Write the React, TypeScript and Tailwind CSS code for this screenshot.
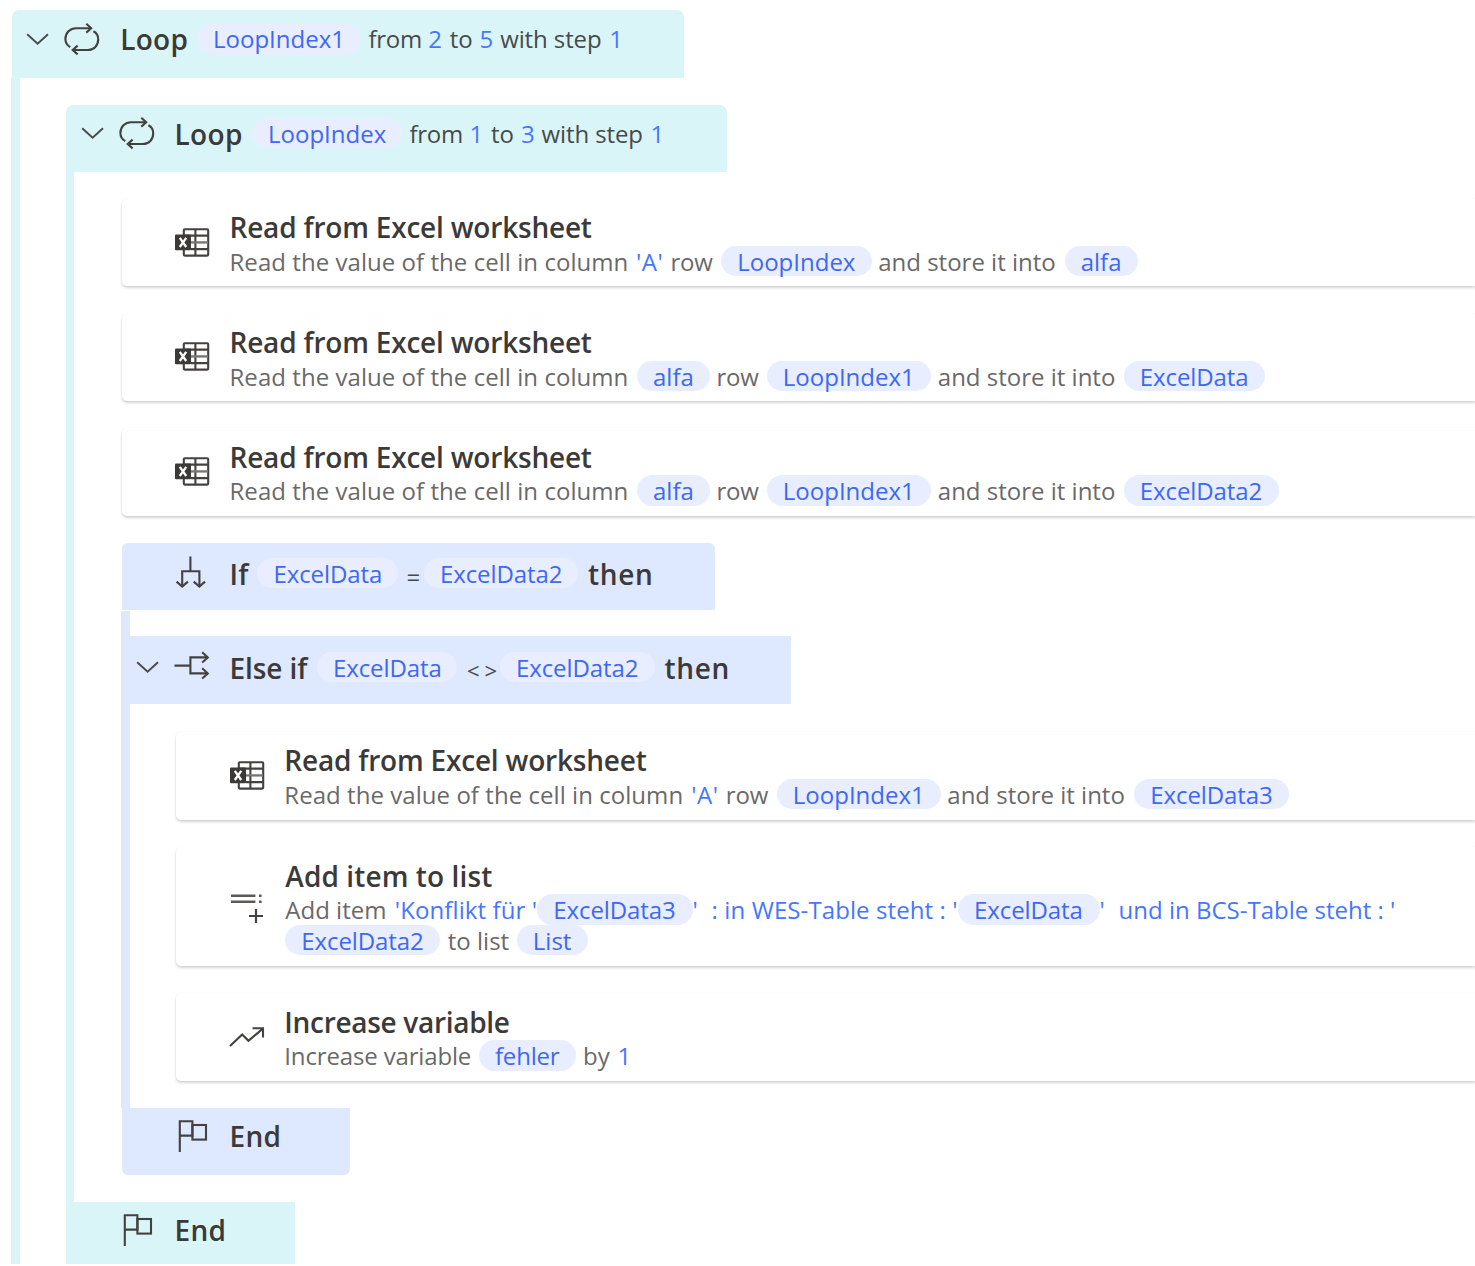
import type { ReactNode } from "react";

/* ---------- icons ---------- */

function Svg({ children, className = "" }: { children: ReactNode; className?: string }) {
  return (
    <svg viewBox="0 0 36 36" fill="none" stroke="#444241" strokeWidth="2.1" className={`h-[36px] w-[36px] shrink-0 ${className}`}>
      {children}
    </svg>
  );
}

function Chevron({ className = "" }: { className?: string }) {
  return (
    <svg viewBox="0 0 24 36" fill="none" stroke="#4a4a4a" strokeWidth="1.9" className={`h-[36px] w-[24px] shrink-0 ${className}`}>
      <path d="M1.2 13.2 L11.6 22.8 L22 13.2" />
    </svg>
  );
}

function LoopIcon() {
  return (
    <Svg>
      <path d="M6.3 26.2 C3.4 24.6 1.4 21.7 1.4 18 C1.4 12 6 7.2 12 7.2 H27" />
      <path d="M22.3 2.8 L27.2 7.2 L22.3 11.6" />
      <path d="M29.4 10.2 C32.6 11.8 34.2 14.7 34.2 18.3 C34.2 24.5 30 29 24 29 H9" />
      <path d="M13.6 24.6 L8.7 29 L13.6 33.4" />
    </Svg>
  );
}

function ExcelIcon() {
  return (
    <Svg>
      <rect x="9.8" y="4.2" width="24.4" height="26.4" rx="1" />
      <path d="M9.8 10.6 H34 M17 24.1 H34 M21.4 4 V31" />
      <path d="M17 17.4 H34" stroke="#7a7877" strokeWidth="2.4" />
      <rect x="1" y="9.6" width="16" height="15.6" rx="1" fill="#3b3a39" stroke="none" />
      <path d="M5.8 12.8 L12.2 22 M12.2 12.8 L5.8 22" stroke="#ffffff" strokeWidth="2.3" />
    </Svg>
  );
}

function IfIcon() {
  return (
    <Svg>
      <path d="M16.4 3.5 V18.3 M8.2 33.5 V18.3 H25.4 V33.5" />
      <path d="M2.6 28.6 L8.2 33.6 L13.9 28.6 M19.7 28.6 L25.4 33.6 L31 28.6" />
    </Svg>
  );
}

function ElseIfIcon() {
  return (
    <Svg>
      <path d="M0.5 18.6 H16.4 M33.5 10.4 H16.4 V26.4 H33.5" />
      <path d="M28.2 5.2 L33.8 10.4 L28.2 15.6 M28.2 21.2 L33.8 26.4 L28.2 31.6" />
    </Svg>
  );
}

function FlagIcon() {
  return (
    <Svg>
      <path d="M5.8 34 V3.2 H18.4 V17.6 H5.8" />
      <rect x="18.4" y="7" width="13.6" height="14.6" />
    </Svg>
  );
}

function AddListIcon() {
  return (
    <Svg>
      <path d="M2 6.8 H26.4 M2 12.8 H26.4 M30 6.8 H32.6 M30 12.8 H32.6" stroke="#5c5a59" strokeWidth="2.6" />
      <path d="M20 27 H34 M27 20 V34" strokeWidth="2.2" />
    </Svg>
  );
}

function TrendIcon() {
  return (
    <Svg>
      <path d="M1 27 L13.2 15.4 L19.4 21.8 L33.8 9.6" strokeWidth="2.1" />
      <path d="M23.6 9.2 H34 V18.4" strokeWidth="2.1" />
    </Svg>
  );
}

/* ---------- text pieces ---------- */

function Run({ children, className }: { children: ReactNode; className: string }) {
  return <span className={`shrink-0 whitespace-pre ${className}`}>{children}</span>;
}

function Lit({ children, className }: { children: ReactNode; className: string }) {
  return <span className={`shrink-0 whitespace-pre text-[#4676ff] ${className}`}>{children}</span>;
}

function Pill({ children, className }: { children: ReactNode; className: string }) {
  return (
    <span className={`h-[30.5px] shrink-0 whitespace-pre rounded-full bg-[#e8eeff] pl-[16px] text-[#3f68f2] ${className}`}>
      {children}
    </span>
  );
}

function Line({ children, className = "" }: { children: ReactNode; className?: string }) {
  return <div className={`flex h-[30.5px] text-[24px] leading-[32px] ${className}`}>{children}</div>;
}

/* ---------- blocks ---------- */

function Action({ icon, title, titleClass, className, children }: { icon: ReactNode; title: string; titleClass: string; className: string; children: ReactNode }) {
  return (
    <section className={`flex items-center rounded-l-[5px] bg-white shadow-[0_2px_3px_rgba(0,0,0,0.17),0_0_2px_rgba(0,0,0,0.05)] ${className}`}>
      {icon}
      <div className="ml-[19px] self-start pt-[10px]">
        <h3 className={`h-[37px] whitespace-pre text-[28px] leading-[37px] font-[580] text-[#3b3a39] ${titleClass}`}>{title}</h3>
        <div className="text-[#6a6968]">{children}</div>
      </div>
    </section>
  );
}

function Header({ chevron, icon, className, children }: { chevron?: ReactNode; icon: ReactNode; className: string; children: ReactNode }) {
  return (
    <header className={`flex items-start ${className}`}>
      <div className="flex w-[93.6px] shrink-0 items-center pt-[10.5px]">
        <div className="mr-[14px] w-[24px]">{chevron}</div>
        {icon}
      </div>
      {children}
    </header>
  );
}

function Keyword({ children, className }: { children: ReactNode; className: string }) {
  return <span className={`shrink-0 whitespace-pre text-[28px] leading-[37px] font-semibold text-[#3b3a39] ${className}`}>{children}</span>;
}

export default function App() {
  return (
    <main className="h-[1266px] w-[1475px] overflow-hidden bg-white pt-[10px] pl-[11px] font-['Open_Sans','Noto_Sans',sans-serif]">
      <Header chevron={<Chevron />} icon={<LoopIcon />} className="ml-px h-[67.7px] w-[672px] rounded-t-[7px] bg-[#daf5f8] pl-[14px]">
        <Keyword className="w-[77.4px] pt-[11px] pl-[0.6px] tracking-[0.3px]">Loop</Keyword>
        <Line className="mt-[13.3px] text-[#474a4b]">
          <Pill className="mr-[7.5px] w-[164px]">LoopIndex1</Pill>
          <Run className="w-[59.7px] tracking-[-0.3px]">from</Run>
          <Lit className="w-[21.5px]">2</Lit>
          <Run className="w-[29.8px]">to</Run>
          <Lit className="w-[20.7px]">5</Lit>
          <Run className="w-[109px] tracking-[-0.1px]">with step</Run>
          <Lit className="w-[14px]">1</Lit>
        </Line>
      </Header>

      <div className="h-[1186.8px] border-l-[9px] border-[#daf5f8] pt-[27px] pl-[46px]">
        <Header chevron={<Chevron />} icon={<LoopIcon />} className="h-[67.3px] w-[660.5px] rounded-t-[7px] bg-[#daf5f8] pl-[15px]">
          <Keyword className="w-[77.4px] pt-[11px] tracking-[0.3px]">Loop</Keyword>
          <Line className="mt-[13.2px] text-[#474a4b]">
            <Pill className="mr-[7.5px] w-[150px]">LoopIndex</Pill>
            <Run className="w-[60px] tracking-[-0.3px]">from</Run>
            <Lit className="w-[21.5px]">1</Lit>
            <Run className="w-[30px]">to</Run>
            <Lit className="w-[20.5px]">3</Lit>
            <Run className="w-[109px] tracking-[-0.1px]">with step</Run>
            <Lit className="w-[14px]">1</Lit>
          </Line>
        </Header>

        <div className="h-[1029.7px] border-l-[8px] border-[#daf5f8] pt-[27px] pl-[48px]">
          <div className="flex flex-col gap-[27.4px]">
            <Action icon={<ExcelIcon />} title="Read from Excel worksheet" titleClass="pl-[0.5px] tracking-[-0.2px]" className="h-[87.2px] pl-[52px]">
              <Line>
                <Run className="w-[407px] pl-[0.5px] tracking-[0.05px]">Read the value of the cell in column</Run>
                <Lit className="w-[34.5px] tracking-[0.5px]">'A'</Lit>
                <Run className="w-[50.7px] tracking-[-0.2px]">row</Run>
                <Pill className="mr-[6.5px] w-[150.5px]">LoopIndex</Pill>
                <Run className="w-[186.5px]">and store it into</Run>
                <Pill className="w-[73px]">alfa</Pill>
              </Line>
            </Action>
            <Action icon={<ExcelIcon />} title="Read from Excel worksheet" titleClass="pl-[0.5px] tracking-[-0.2px]" className="h-[87.2px] pl-[52px]">
              <Line>
                <Run className="w-[408px] pl-[0.5px] tracking-[0.05px]">Read the value of the cell in column</Run>
                <Pill className="mr-[6.5px] w-[73px]">alfa</Pill>
                <Run className="w-[50.3px] tracking-[-0.2px]">row</Run>
                <Pill className="mr-[6.5px] w-[164.5px]">LoopIndex1</Pill>
                <Run className="w-[186px]">and store it into</Run>
                <Pill className="w-[141px] tracking-[-0.1px]">ExcelData</Pill>
              </Line>
            </Action>
            <Action icon={<ExcelIcon />} title="Read from Excel worksheet" titleClass="pt-[1.2px] pl-[0.5px] tracking-[-0.2px]" className="h-[87.4px] pl-[52px]">
              <Line>
                <Run className="w-[408px] pl-[0.5px] tracking-[0.05px]">Read the value of the cell in column</Run>
                <Pill className="mr-[6.5px] w-[73px]">alfa</Pill>
                <Run className="w-[50.3px] tracking-[-0.2px]">row</Run>
                <Pill className="mr-[6.5px] w-[164.5px]">LoopIndex1</Pill>
                <Run className="w-[186px]">and store it into</Run>
                <Pill className="w-[155px] tracking-[-0.1px]">ExcelData2</Pill>
              </Line>
            </Action>
          </div>

          <Header icon={<IfIcon />} className="mt-[27.1px] h-[67px] w-[592.7px] rounded-t-[6px] bg-[#dee8ff] pl-[14px]">
            <Keyword className="w-[27.9px] pt-[13.4px]">If</Keyword>
            <Line className="mt-[15.3px] text-[#474a4b]">
              <Pill className="mr-[8px] w-[141px] tracking-[-0.1px]">ExcelData</Pill>
              <Run className="w-[17.5px] pt-[3.5px]">=</Run>
              <Pill className="mr-[9.5px] w-[154.5px] tracking-[-0.1px]">ExcelData2</Pill>
            </Line>
            <Keyword className="pt-[13.4px] tracking-[0.7px]">then</Keyword>
          </Header>

          <div className="mt-[1.3px] -ml-[1px] h-[496.7px] border-l-[9px] border-[#dee8ff] pt-[25.5px]">
            <Header chevron={<Chevron className="translate-y-[2px]" />} icon={<ElseIfIcon />} className="-ml-[9px] h-[67.2px] w-[670px] bg-[#dee8ff] pl-[15px]">
              <Keyword className="w-[87.4px] pt-[13.4px] tracking-[-0.1px]">Else if</Keyword>
              <Line className="mt-[15.3px] text-[#474a4b]">
                <Pill className="mr-[9.5px] w-[140.5px] tracking-[-0.1px]">ExcelData</Pill>
                <Run className="w-[33px] pt-[2.7px] text-[22px] tracking-[5px]">&lt;&gt;</Run>
                <Pill className="mr-[9.5px] w-[155px] tracking-[-0.1px]">ExcelData2</Pill>
              </Line>
              <Keyword className="pt-[13.4px] tracking-[0.7px]">then</Keyword>
            </Header>

            <div className="flex flex-col gap-[27.4px] pt-[28px] pl-[46px]">
              <Action icon={<ExcelIcon />} title="Read from Excel worksheet" titleClass="pt-[0.8px] tracking-[-0.2px]" className="h-[88.3px] pl-[53.3px]">
                <Line>
                  <Run className="w-[407px] tracking-[0.05px]">Read the value of the cell in column</Run>
                  <Lit className="w-[34.5px] tracking-[0.5px]">'A'</Lit>
                  <Run className="w-[51px] tracking-[-0.2px]">row</Run>
                  <Pill className="mr-[6.5px] w-[164px]">LoopIndex1</Pill>
                  <Run className="w-[187px]">and store it into</Run>
                  <Pill className="w-[155px] tracking-[-0.1px]">ExcelData3</Pill>
                </Line>
              </Action>
              <Action icon={<AddListIcon />} title="Add item to list" titleClass="pt-[0.6px] pl-[1px] tracking-[0.1px]" className="h-[118.6px] pl-[53.3px]">
                <Line className="pl-[1px]">
                  <Run className="w-[109.5px]">Add item</Run>
                  <Lit className="w-[142.5px] tracking-[0.1px]">'Konflikt für '</Lit>
                  <Pill className="w-[155.3px] tracking-[-0.1px]">ExcelData3</Pill>
                  <Lit className="w-[19px]">'</Lit>
                  <Lit className="w-[246.5px] tracking-[0.1px]">: in WES-Table steht : '</Lit>
                  <Pill className="w-[141.5px] tracking-[-0.1px]">ExcelData</Pill>
                  <Lit className="w-[19px]">'</Lit>
                  <Lit className="w-[280px]">und in BCS-Table steht : '</Lit>
                </Line>
                <Line className="pl-[1px]">
                  <Pill className="mr-[7.5px] w-[155px] tracking-[-0.1px]">ExcelData2</Pill>
                  <Run className="w-[69px]">to list</Run>
                  <Pill className="w-[71.5px]">List</Pill>
                </Line>
              </Action>
              <Action icon={<TrendIcon />} title="Increase variable" titleClass="pt-[0.6px] tracking-[-0.3px]" className="h-[87.3px] pl-[53.3px]">
                <Line>
                  <Run className="w-[194.7px] tracking-[-0.15px]">Increase variable</Run>
                  <Pill className="mr-[7px] w-[97px] tracking-[-0.2px]">fehler</Pill>
                  <Run className="w-[34.5px]">by</Run>
                  <Lit className="w-[14px]">1</Lit>
                </Line>
              </Action>
            </div>
          </div>

          <Header icon={<FlagIcon />} className="h-[67px] w-[228.3px] rounded-b-[6px] bg-[#dee8ff] pl-[14px]">
            <Keyword className="pt-[10px] tracking-[0.3px]">End</Keyword>
          </Header>
        </div>

        <Header icon={<FlagIcon />} className="h-[62.8px] w-[228.7px] bg-[#daf5f8] pl-[15px]">
          <Keyword className="pt-[10px] tracking-[0.3px]">End</Keyword>
        </Header>
      </div>
    </main>
  );
}
